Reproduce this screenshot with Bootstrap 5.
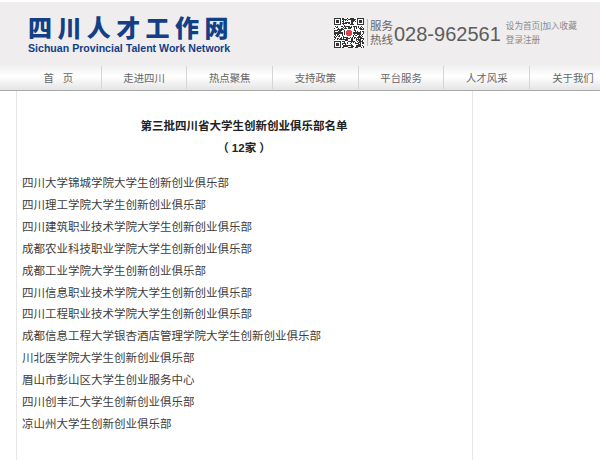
<!DOCTYPE html>
<html lang="zh-CN">
<head>
    <meta charset="UTF-8">
    <meta name="viewport" content="width=device-width, initial-scale=1.0">
    <title>四川人才工作网</title>
    <link href="https://cdn.jsdelivr.net/npm/bootstrap@5.3.2/dist/css/bootstrap.min.css" rel="stylesheet">
    <style>
        html, body {
            height: 461px;
            overflow: hidden;
        }
        body {
            font-family: "Liberation Sans", "Noto Sans CJK SC", sans-serif;
            background: #fff;
            padding-top: 2px;
        }
        .site-head {
            height: 63px;
            background: #efedee;
            padding-left: 28px;
        }
        .logo-block {
            width: 204px;
            flex: none;
            padding-top: 12px;
        }
        .logo-cn {
            font-family: "Noto Sans CJK SC", sans-serif;
            font-weight: 900;
            font-size: 24px;
            line-height: 26px;
            letter-spacing: 5.4px;
            color: #123f86;
            white-space: nowrap;
        }
        .logo-en {
            margin-top: 2px;
            font-weight: 700;
            font-size: 10.6px;
            line-height: 12px;
            color: #123f86;
            white-space: nowrap;
        }
        .qr-box {
            width: 30px;
            height: 30px;
            margin-left: 102px;
            margin-top: 16px;
            background: #fff;
            flex: none;
        }
        .hot-divider {
            width: 1px;
            height: 27px;
            margin: 17px 2px 0 3px;
            background: #bbb;
            flex: none;
        }
        .hot-label {
            width: 24px;
            margin-top: 17px;
            font-size: 11.5px;
            line-height: 14px;
            color: #666;
            flex: none;
        }
        .hot-number {
            margin-top: 19px;
            font-size: 20px;
            line-height: 27px;
            color: #5c5c5c;
            white-space: nowrap;
            flex: none;
        }
        .head-links {
            margin-left: 5px;
            margin-top: 17px;
            font-size: 8.6px;
            line-height: 14px;
            color: #888;
            white-space: nowrap;
            flex: none;
        }
        .main-nav {
            height: 26px;
            width: 600px;
            flex-wrap: nowrap;
            padding-left: 16px;
            background: linear-gradient(#efefef, #fff 45%, #e4e4e4);
            border-bottom: 1px solid #a9a9a9;
            overflow: hidden;
        }
        .main-nav .nav-link {
            width: 85.7px;
            flex: none;
            height: 23px;
            margin-top: 1px;
            padding: 0;
            font-size: 10.4px;
            line-height: 25px;
            text-align: center;
            color: #666;
            border-right: 1px solid #d4d6d6;
            white-space: nowrap;
        }
        .main-nav .nav-item:last-child .nav-link {
            border-right: 0;
        }
        .page-area {
            width: 457px;
            height: 369px;
            margin-left: 16px;
            border-left: 1px solid #e6e6e6;
            border-right: 1px solid #e6e6e6;
            padding: 24px 6px 0 5px;
        }
        .doc-title {
            font-size: 11.5px;
            line-height: 22px;
            font-weight: 700;
            color: #222;
            text-align: center;
            margin: 0;
        }
        .club-list {
            margin-top: 14px;
            font-size: 11.5px;
            line-height: 21.9px;
            color: #3d3d3d;
        }
    </style>
</head>
<body>
    <!-- 顶部 -->
    <header class="site-head d-flex">
        <div class="logo-block">
            <div class="logo-cn">四川人才工作网</div>
            <div class="logo-en">Sichuan Provincial Talent Work Network</div>
        </div>
        <svg class="qr-box" id="qr" viewBox="0 0 29 29" shape-rendering="crispEdges"></svg>
        <div class="hot-divider"></div>
        <div class="hot-label">服务<br>热线</div>
        <div class="hot-number">028-962561</div>
        <div class="head-links">设为首页|加入收藏<br>登录注册</div>
    </header>

    <!-- 导航 -->
    <ul class="nav main-nav">
        <li class="nav-item"><a class="nav-link" href="#">首&nbsp;&nbsp;&nbsp;页</a></li>
        <li class="nav-item"><a class="nav-link" href="#">走进四川</a></li>
        <li class="nav-item"><a class="nav-link" href="#">热点聚焦</a></li>
        <li class="nav-item"><a class="nav-link" href="#">支持政策</a></li>
        <li class="nav-item"><a class="nav-link" href="#">平台服务</a></li>
        <li class="nav-item"><a class="nav-link" href="#">人才风采</a></li>
        <li class="nav-item"><a class="nav-link" href="#">关于我们</a></li>
    </ul>

    <!-- 正文 -->
    <main class="page-area">
        <h1 class="doc-title">第三批四川省大学生创新创业俱乐部名单</h1>
        <h2 class="doc-title">（ 12家 ）</h2>
        <div class="club-list">
            <div>四川大学锦城学院大学生创新创业俱乐部</div>
            <div>四川理工学院大学生创新创业俱乐部</div>
            <div>四川建筑职业技术学院大学生创新创业俱乐部</div>
            <div>成都农业科技职业学院大学生创新创业俱乐部</div>
            <div>成都工业学院大学生创新创业俱乐部</div>
            <div>四川信息职业技术学院大学生创新创业俱乐部</div>
            <div>四川工程职业技术学院大学生创新创业俱乐部</div>
            <div>成都信息工程大学银杏酒店管理学院大学生创新创业俱乐部</div>
            <div>川北医学院大学生创新创业俱乐部</div>
            <div>眉山市彭山区大学生创业服务中心</div>
            <div>四川创丰汇大学生创新创业俱乐部</div>
            <div>凉山州大学生创新创业俱乐部</div>
        </div>
    </main>

    <script src="https://cdn.jsdelivr.net/npm/bootstrap@5.3.2/dist/js/bootstrap.bundle.min.js"></script>
    <script>
        // 二维码: 定位角 + 伪随机模块 + 中间红点
        function inFinder(x, y) {
            return (x < 8 && y < 8) || (x > 20 && y < 8) || (x < 8 && y > 20);
        }
        function finder(ox, oy) {
            return `<rect x="${ox}" y="${oy}" width="7" height="7" fill="#333"/>` +
                `<rect x="${ox + 1}" y="${oy + 1}" width="5" height="5" fill="#fff"/>` +
                `<rect x="${ox + 2}" y="${oy + 2}" width="3" height="3" fill="#333"/>`;
        }
        let seed = 73, out = '';
        for (let y = 0; y < 29; y++) {
            for (let x = 0; x < 29; x++) {
                seed = (seed * 1103515245 + 12345) & 0x7fffffff;
                if (!inFinder(x, y) && (seed >> 16) % 100 < 52) {
                    out += `<rect x="${x}" y="${y}" width="1" height="1" fill="#333"/>`;
                }
            }
        }
        out += finder(0, 0) + finder(22, 0) + finder(0, 22);
        out += '<rect x="11" y="11" width="7" height="7" fill="#fff"/>';
        out += '<path d="M13 12h3v1h1v3h-1v1h-3v-1h-1v-3h1z" fill="#e0404a"/>';
        document.getElementById('qr').innerHTML = out;
    </script>
</body>
</html>
